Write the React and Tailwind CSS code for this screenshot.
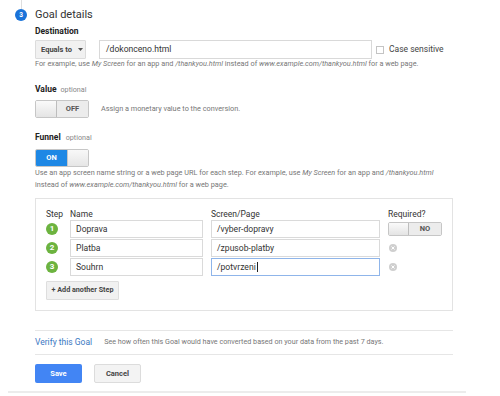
import React from "react";

function Toggle({ on, label, handleW = 21, labelW = 31, h = 18 }) {
  if (on) {
    return (
      <div className="flex rounded-[2px] border border-[#c6c6c6] overflow-hidden" style={{ height: h }}>
        <div className="flex items-center justify-center bg-[#1e88e5] text-white font-bold text-[7.5px]" style={{ width: labelW }}>
          {label}
        </div>
        <div className="bg-gradient-to-b from-[#f8f8f8] to-[#e6e6e6] border-l border-[#c6c6c6]" style={{ width: handleW }} />
      </div>
    );
  }
  return (
    <div className="flex rounded-[2px] border border-[#c6c6c6] overflow-hidden" style={{ height: h }}>
      <div className="bg-gradient-to-b from-[#fafafa] to-[#e4e4e4] border-r border-[#bdbdbd]" style={{ width: handleW }} />
      <div className="flex items-center justify-center bg-[#ececec] text-[#555] font-bold text-[7.5px]" style={{ width: labelW }}>
        {label}
      </div>
    </div>
  );
}

function XIcon() {
  return (
    <svg width="8" height="8" viewBox="0 0 8 8">
      <circle cx="4" cy="4" r="4" fill="#cfcfcf" />
      <path d="M2.5 2.5 L5.5 5.5 M5.5 2.5 L2.5 5.5" stroke="#fff" strokeWidth="1" />
    </svg>
  );
}

function StepCircle({ n }) {
  return (
    <div className="w-[12px] h-[12px] rounded-full bg-[#6cb33f] text-white text-[8px] font-bold flex items-center justify-center leading-none">
      {n}
    </div>
  );
}

export default function App() {
  const rows = [
    { n: 1, name: "Doprava", page: "/vyber-dopravy" },
    { n: 2, name: "Platba", page: "/zpusob-platby" },
    { n: 3, name: "Souhrn", page: "/potvrzeni", focus: true },
  ];
  return (
    <div className="w-[500px] h-[396px] bg-white overflow-hidden text-[#222]" style={{ fontFamily: "Roboto, 'Liberation Sans', sans-serif" }}>
      <div className="ml-[21px] w-px h-[9px] bg-[#dedede]" />
      <div className="flex items-center h-[12px] ml-[15px] gap-[8px]">
        <div className="w-[12px] h-[12px] rounded-full bg-[#1a73d9] text-white text-[6.5px] font-bold flex items-center justify-center leading-none">
          3
        </div>
        <div className="text-[11px] leading-[12px] text-[#333]">Goal details</div>
      </div>

      <div className="pl-[35px]">
        <div className="mt-[4px] text-[8.5px] leading-[12px] font-bold">Destination</div>
        <div className="mt-[3px] flex items-center h-[19px]">
          <div className="h-[19px] w-[51px] bg-[#f1f1f1] border border-[#dcdcdc] rounded-[1px] flex items-center pl-[5px] text-[7.5px] font-bold text-[#444]">
            Equals to
            <svg width="5" height="3" viewBox="0 0 5 3" className="ml-[6px]">
              <path d="M0 0 L5 0 L2.5 3 Z" fill="#555" />
            </svg>
          </div>
          <div className="ml-[13px] h-[19px] w-[273px] border border-[#d9d9d9] flex items-center pl-[6px] text-[8.6px] text-[#333]">
            /dokonceno.html
          </div>
          <div className="ml-[4px] w-[8px] h-[8px] border border-[#c4c4c4] bg-white" />
          <div className="ml-[5px] text-[8.5px] text-[#444]">Case sensitive</div>
        </div>
        <div className="text-[7.3px] leading-[10px] text-[#777]">
          For example, use <i>My Screen</i> for an app and <i>/thankyou.html</i> instead of <i>www.example.com/thankyou.html</i> for a web page.
        </div>

        <div className="mt-[14px] flex items-baseline leading-[12px]">
          <span className="text-[8.5px] font-bold">Value</span>
          <span className="ml-[4px] text-[7.2px] text-[#888]">optional</span>
        </div>
        <div className="mt-[4px] flex items-center">
          <Toggle on={false} label="OFF" />
          <div className="ml-[12px] text-[7.3px] text-[#777]">Assign a monetary value to the conversion.</div>
        </div>

        <div className="mt-[13px] flex items-baseline leading-[12px]">
          <span className="text-[8.5px] font-bold">Funnel</span>
          <span className="ml-[5px] text-[7.2px] text-[#888]">optional</span>
        </div>
        <div className="mt-[5px] flex">
          <Toggle on={true} label="ON" />
        </div>
        <div className="text-[7.3px] leading-[11.5px] text-[#777] w-[420px]">
          Use an app screen name string or a web page URL for each step. For example, use <i>My Screen</i> for an app and <i>/thankyou.html</i>
          <br />
          instead of <i>www.example.com/thankyou.html</i> for a web page.
        </div>

        <div className="mt-[8px] w-[418px] border border-[#e3e3e3] pl-[10px] pt-[9px] pb-[10px]">
          <div className="flex text-[8.5px] leading-[12px] text-[#333]">
            <div className="w-[24px]">Step</div>
            <div className="w-[133px]">Name</div>
            <div className="ml-[8px] w-[169px]">Screen/Page</div>
            <div className="ml-[8px]">Required?</div>
          </div>
          <div className="flex flex-col gap-[1px]">
            {rows.map((r) => (
              <div key={r.n} className="flex items-center h-[18px]">
                <div className="w-[24px] flex items-center">
                  <StepCircle n={r.n} />
                </div>
                <div className="w-[133px] h-[18px] border border-[#dadada] flex items-center pl-[5px] text-[8.6px] text-[#333]">
                  {r.name}
                </div>
                <div
                  className={
                    "ml-[8px] w-[169px] h-[18px] border flex items-center pl-[5px] text-[8.6px] text-[#333] " +
                    (r.focus ? "border-[#8fb5ea]" : "border-[#dadada]")
                  }
                >
                  {r.page}
                  {r.focus && <span className="ml-[1px] w-px h-[10px] bg-[#222]" />}
                </div>
                <div className="ml-[8px] flex items-center">
                  {r.n === 1 ? (
                    <Toggle on={false} label="NO" handleW={20} labelW={32} h={14} />
                  ) : (
                    <div className="ml-[1px]">
                      <XIcon />
                    </div>
                  )}
                </div>
              </div>
            ))}
          </div>
          <div className="mt-[5px] h-[19px] w-[73px] bg-[#f1f1f1] border border-[#dedede] rounded-[1px] flex items-center justify-center text-[7.2px] font-bold text-[#444]">
            + Add another Step
          </div>
        </div>

        <div className="mt-[19px] w-[418px] h-px bg-[#e6e6e6]" />
        <div className="w-[418px] h-[23px] flex items-center">
          <span className="text-[8.5px] text-[#3b78c2]">Verify this Goal</span>
          <span className="ml-[12px] text-[7.2px] text-[#777]">
            See how often this Goal would have converted based on your data from the past 7 days.
          </span>
        </div>
        <div className="w-[418px] h-px bg-[#e6e6e6]" />

        <div className="mt-[9px] flex gap-[12px]">
          <div className="h-[19px] w-[47px] rounded-[2px] bg-[#4285f4] text-white text-[7.5px] font-bold flex items-center justify-center">
            Save
          </div>
          <div className="h-[19px] w-[47px] rounded-[2px] bg-[#f3f3f3] border border-[#dcdcdc] text-[#444] text-[7.5px] font-bold flex items-center justify-center">
            Cancel
          </div>
        </div>
      </div>
      <div className="mt-[8px] ml-[8px] w-[458px] h-[2px] bg-[#ececec]" />
    </div>
  );
}
